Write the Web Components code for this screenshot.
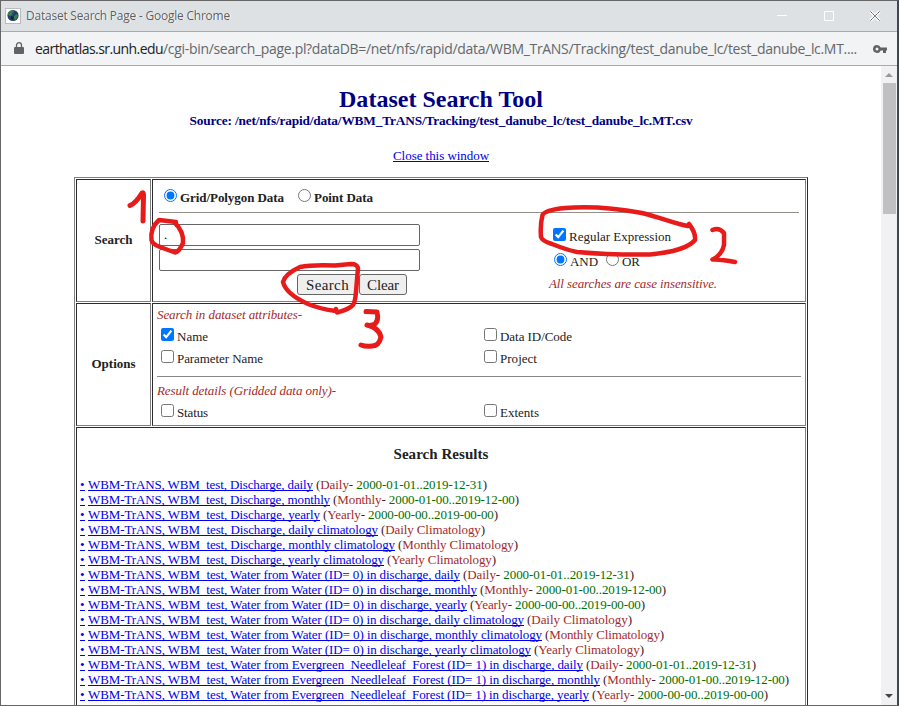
<!DOCTYPE html>
<html lang="en">
<head>
<meta charset="utf-8">
<title>Dataset Search Page</title>
<style>
html,body{margin:0;height:706px;overflow:hidden;background:#fff}
body{font:13px/15px "Liberation Serif","Times New Roman",serif}
</style>
</head>
<body>
<popup-window></popup-window>
<script>
const define=(name,css,html,setup)=>{
  const t=document.createElement('template');
  t.innerHTML=`<style>${css}</style>${html}`;
  customElements.define(name,class extends HTMLElement{
    connectedCallback(){
      if(this.shadowRoot)return;
      this.attachShadow({mode:'open'}).append(t.content.cloneNode(true));
      if(setup)setup.call(this,this.shadowRoot);
    }
  });
};

/* Text run whose tracking is adjusted to fill the width in its "w" attribute */
define('fit-text',`:host{display:inline-block;white-space:pre}span{display:inline-block;white-space:pre}:host([line]) span{text-decoration:underline;text-decoration-skip-ink:none}`,
  `<span><slot></slot></span>`,function(r){
  const w=+this.getAttribute('w'),s=r.querySelector('span');
  const n=[...this.textContent].length;
  s.style.letterSpacing=(w-s.getBoundingClientRect().width)/n+'px';
  this.style.width=w+'px';
});

define('title-bar',`
:host{display:flex;align-items:center;border-bottom:1px solid #aaa;background:#dee1e4;box-sizing:border-box;height:31px;padding:0 14px 0 4px;color:#5c5f63;font:12px/16px "Open Sans","Noto Sans",sans-serif}
.t{margin-left:5px;text-shadow:1px 0 0 #fff}
.sp{flex:1}.c{display:block}
`,`<svg width="16" height="16" viewBox="0 0 16 16"><rect x=".5" y=".5" width="15" height="15" fill="#fff" stroke="#bbb"/><circle cx="8" cy="7.5" r="5.6" fill="#223f70"/><path d="M3 5Q5 2 8 2.2L9 4 7 5 7.5 7 5 8 3 7ZM9 8l3-2 1 2-2 4-2-1Z" fill="#3c7d50"/><path d="M6 8l3 1-1 3-2-1Z" fill="#16222e"/></svg>
<fit-text class="t" w="204">Dataset Search Page - Google Chrome</fit-text><span class="sp"></span>
<svg class="c" width="106" height="14" viewBox="0 0 106 14" fill="none"><path d="M0 6.500h10M47.500 2.500h9v9h-9z" stroke="#fff"/><path d="M93.500 2.500l9 9m0-9l-9 9" stroke="#fff" stroke-width="3"/><path d="M93.500 2.500l9 9m0-9l-9 9" stroke="#444" stroke-dasharray="2 .7"/></svg>`);

define('address-bar',`
:host{display:flex;align-items:center;box-sizing:border-box;height:34px;background:#f1f3f5;border-bottom:1px solid #aaa;padding:0 10px 0 13px;color:#64676b;font:14px/20px "Open Sans","Noto Sans",sans-serif}
.u{margin-left:11px}.h{color:#202124}.k{margin-left:auto}
`,`<svg width="10" height="13" viewBox="0 0 10 13"><path d="M1 5h8q1 0 1 1v5q0 1-1 1H1q-1 0-1-1V6q0-1 1-1Z" fill="#5f6368"/><path d="M2.500 5V3.200a2.500 2.500 0 0 1 5 0V5" fill="none" stroke="#5f6368" stroke-width="1.300"/></svg>
<fit-text class="u h" w="128">earthatlas.sr.unh.edu</fit-text><fit-text w="694">/cgi-bin/search_page.pl?dataDB=/net/nfs/rapid/data/WBM_TrANS/Tracking/test_danube_lc/test_danube_lc.MT....</fit-text>
<svg class="k" width="14" height="10" viewBox="0 0 14 10"><path fill="#5f6368" fill-rule="evenodd" d="M4 1a4 4 0 0 1 3.700 2.500H14v3h-1V9h-3V6.500H7.700A4 4 0 1 1 4 1Zm0 2.500a1.500 1.500 0 1 0 0 3 1.500 1.500 0 0 0 0-3Z"/></svg>`);

define('scroll-bar',`
:host{display:flex;flex-direction:column;align-items:center;width:16px;height:100%;background:#f1f1f4;box-sizing:border-box}
.up{margin-top:7px}.th{width:13px;height:131px;background:#c0bfc2;margin-top:6px}.dn{margin-top:auto;margin-bottom:7px}svg{display:block}
`,`<svg class="up" width="8" height="4"><path d="M0 4 4 0l4 4Z" fill="#999"/></svg><div class="th"></div><svg class="dn" width="8" height="4"><path d="M0 0h8L4 4Z" fill="#444"/></svg>`);

/* Checkbox or radio with its caption */
define('choice-field',`
:host{display:flex;height:15px;align-items:flex-start}
input{margin:0 3px 0 0;width:13px;height:13px;flex:none}
span{margin-top:1px;display:block;color:#222}
`,`<input><span><slot></slot></span>`,function(r){
  const i=r.querySelector('input');
  i.type=this.getAttribute('type')||'checkbox';
  i.checked=this.hasAttribute('checked');
});

define('search-panel',`
:host{display:block;padding:9px 6px 0 6px}
.top{display:flex;padding-left:5px;height:23px;font-weight:700}
.top choice-field+choice-field{margin-left:14px}
hr{margin:0;border:0;height:1px;background:#909088}
.row{display:flex;justify-content:space-between;margin-top:11px}
.left{width:261px}
input{display:block;box-sizing:border-box;width:261px;height:22px;border:1px solid #666;border-radius:2px;margin:0 0 3px;padding:1px 4px;font:13px "Liberation Serif",serif;outline:0}
.btns{display:flex;padding-left:138px;margin-top:3px;gap:1px}
button{box-sizing:border-box;height:21px;border:1px solid #666;border-radius:3px;background:#efefef;padding:0;font:15px/18px "Liberation Serif","Times New Roman",serif;color:#222}
.right{width:250px;padding-top:4px}
.logic{display:flex;margin-top:10px;padding-left:5px}
.logic choice-field+choice-field{margin-left:8px}
i{display:block;margin-top:8px;color:#a52a2a}
`,`<div class="top"><choice-field type="radio" checked><fit-text w="104">Grid/Polygon Data</fit-text></choice-field><choice-field type="radio"><fit-text w="59">Point Data</fit-text></choice-field></div>
<hr><div class="row"><div class="left"><input value="."><input><div class="btns"><button style="width:61px"><fit-text w="43">Search</fit-text></button><button style="width:48px"><fit-text w="32">Clear</fit-text></button></div></div>
<div class="right"><choice-field checked style="padding-left:4px"><fit-text w="102">Regular Expression</fit-text></choice-field><div class="logic"><choice-field type="radio" checked><fit-text w="28">AND</fit-text></choice-field><choice-field type="radio"><fit-text w="18">OR</fit-text></choice-field></div><i><fit-text w="168">All searches are case insensitive.</fit-text></i></div></div>`);

define('options-panel',`
:host{display:block;padding:3px 4px 0}
i{display:block;color:#a52a2a;height:15px}
.g{display:grid;grid-template-columns:323px 1fr;row-gap:7px;padding:6px 0 0 4px}
hr{border:0;margin:11px 0 6px;height:1px;background:#888}
`,`<i><fit-text w="145">Search in dataset attributes-</fit-text></i>
<div class="g"><choice-field checked><fit-text w="31">Name</fit-text></choice-field><choice-field><fit-text w="72">Data ID/Code</fit-text></choice-field><choice-field><fit-text w="86">Parameter Name</fit-text></choice-field><choice-field><fit-text w="37">Project</fit-text></choice-field></div>
<hr><i><fit-text w="179">Result details (Gridded data only)-</fit-text></i>
<div class="g"><choice-field><fit-text w="31">Status</fit-text></choice-field><choice-field><fit-text w="39">Extents</fit-text></choice-field></div>`);

define('result-row',`
:host{display:flex;height:15px;white-space:pre;color:#402030}
a{color:#00e}
.b{width:5px;margin-right:3px}.p{color:#a52a2a}.d{color:#007000}.m{margin-left:3px}
`,``,function(r){
  const g=k=>this.getAttribute(k),dates=g('dates');
  const tail=dates?`(<span class="p">${g('period')}</span>- <span class="d">${dates}</span>)`:`(<span class="p">${g('period')}</span>)`;
  const a=+g('link-end'),e=+g('end');
  r.innerHTML+=`<a class="b"><fit-text line w="5">•</fit-text></a><a><fit-text line w="${a-88}">${g('name')}</fit-text></a><fit-text class="m" w="${e-a-3}">${tail}</fit-text>`;
});

define('result-list',`
:host{display:block;padding:18px 3px 0}
h4{margin:0 0 14px;height:17px;font-size:15px;line-height:17px;text-align:center;color:#222}
`,`<h4><fit-text w="95">Search Results</fit-text></h4><div></div>`,function(r){
  const water='Water from Water (ID= 0) in discharge, ',forest='Water from Evergreen_Needleleaf_Forest (ID= 1) in discharge, ';
  const D='2000-01-01..2019-12-31',M='2000-01-00..2019-12-00',Y='2000-00-00..2019-00-00';
  const rows=[
   ['Discharge, daily','Daily',D,313,487],['Discharge, monthly','Monthly',M,330,519],['Discharge, yearly','Yearly',Y,320,498],
   ['Discharge, daily climatology','Daily Climatology','',378,485],['Discharge, monthly climatology','Monthly Climatology','',395,518],['Discharge, yearly climatology','Yearly Climatology','',384,496],
   [water+'daily','Daily',D,460,634],[water+'monthly','Monthly',M,477,666],[water+'yearly','Yearly',Y,467,645],
   [water+'daily climatology','Daily Climatology','',524,632],[water+'monthly climatology','Monthly Climatology','',542,664],[water+'yearly climatology','Yearly Climatology','',531,644],
   [forest+'daily','Daily',D,583,756],[forest+'monthly','Monthly',M,600,789],[forest+'yearly','Yearly',Y,589,768]];
  r.querySelector('div').innerHTML=rows.map(x=>`<result-row name="WBM-TrANS, WBM_test, ${x[0]}" period="${x[1]}" dates="${x[2]}" link-end="${x[3]}" end="${x[4]}"></result-row>`).join('');
});

define('search-table',`
:host{display:grid;box-sizing:border-box;width:734px;margin-left:73px;grid-template-columns:75px 1fr;grid-template-rows:123px 123px 300px;gap:1px;padding:1px;border:1px solid #808080;border-right-color:#2c2c2c}
.c{box-sizing:border-box;border:1px solid;border-color:#2c2c2c #808080 #808080 #2c2c2c;min-width:0}
.h{display:flex;align-items:center;justify-content:center;font-weight:700;color:#222;padding-bottom:2px}
.w{grid-column:1/3}
`,`<div class="c h"><fit-text w="38">Search</fit-text></div><div class="c"><search-panel></search-panel></div>
<div class="c h"><fit-text w="44">Options</fit-text></div><div class="c"><options-panel></options-panel></div>
<div class="c w"><result-list></result-list></div>`);

/* Hand-drawn red pen marks numbering the steps */
define('pen-marks',`:host{position:absolute;left:-1px;top:-1px;width:899px;height:706px;pointer-events:none}`,
`<svg width="899" height="706" fill="none" stroke="#e81b1b" stroke-width="5" stroke-linecap="round" stroke-linejoin="round">
<path d="M130 205.500Q136 203 142 193Q143.500 192 143.500 195L143 221"/>
<path stroke-width="4.500" d="M176 222L159 220Q150 228 151.500 240Q152 244 160 247L175 252.500Q179 252 183 243Q184 231 174 222"/>
<path stroke-width="4.500" d="M688 226C676 224 662 218 642 213C615 208 590 206 565 208Q545 210 542.500 215Q540 225 541 237Q542 241 552 244Q567 250 577 252Q610 255 650 254.500Q686 251 695 240Q696 233 689 224"/>
<path stroke-width="4.500" d="M712.500 230Q719 227 724 233L724 245Q722 255 712.500 259.500Q721 259 735 262"/>
<path stroke-width="4.500" d="M336 311Q320 309 308 304Q286 294 283 282Q285 274 300 267Q312 264.500 335 265.500L351 264Q357 264 358 268L356 292Q355 304 352 306Q347 310 337 312.500L336 309"/>
<path d="M366 311.500L377 312Q379 320 375 324Q369 326 367 325Q379 328 381 337Q379 346 372 346Q366 347 361 345"/></svg>`);

define('popup-window',`
:host{display:flex;flex-direction:column;position:relative;box-sizing:border-box;width:899px;height:706px;border-top:1px solid #666;border-left:1px solid #666;border-bottom:1px solid #666;background:#fff;overflow:hidden;border-right:2px solid #44464e}
.m{display:flex;flex:1;min-height:0}
.p{flex:1;overflow:hidden;height:100%}
h1{margin:19px 0 0;text-align:center;color:#000080;font-size:24px;line-height:28px;height:28px}
h2{margin:0;text-align:center;color:#000080;font-size:13.333px;line-height:15px;height:15px}
.close{text-align:center;margin:20px 0 13px;height:16px}
a{color:#00e}
`,`<title-bar></title-bar><address-bar></address-bar><div class="m"><div class="p"><h1><fit-text w="204">Dataset Search Tool</fit-text></h1><h2><fit-text w="503">Source: /net/nfs/rapid/data/WBM_TrANS/Tracking/test_danube_lc/test_danube_lc.MT.csv</fit-text></h2><div class="close"><a><fit-text line w="96">Close this window</fit-text></a></div><search-table></search-table></div><scroll-bar></scroll-bar></div><pen-marks></pen-marks>`);
</script>
</body>
</html>
